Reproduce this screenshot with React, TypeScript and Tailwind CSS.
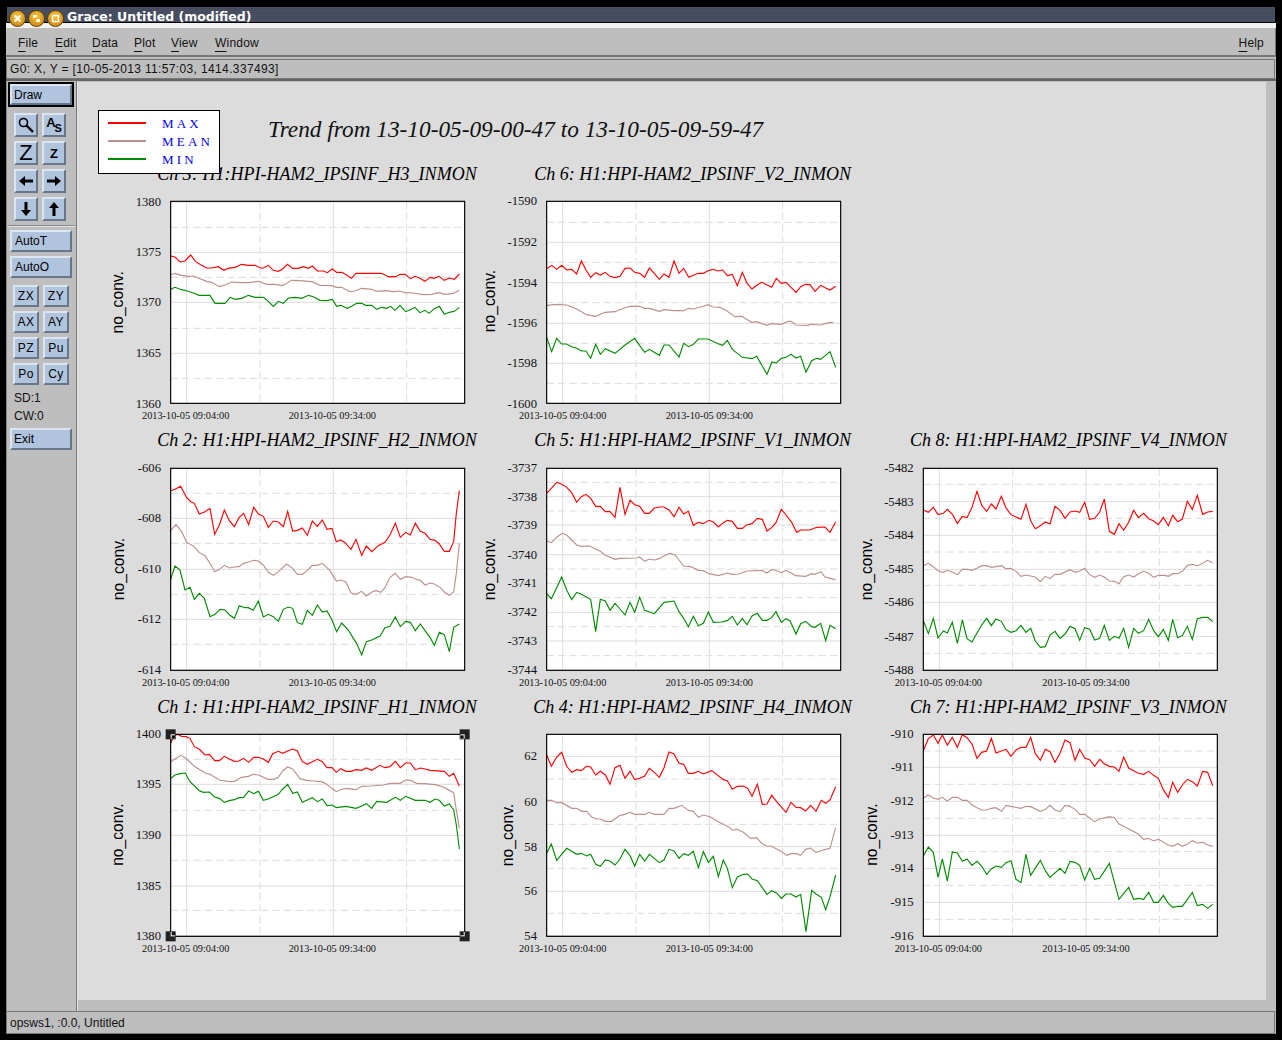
import type { ReactNode } from "react";

type Plot = {
  title: string;
  titleX: number;
  titleY: number;
  x0: number;
  top: number;
  h: number;
  yLabelX: number;
  yLabelY: number;
  ticks: [string, number][];
  minor: number[];
  red: string;
  mean: string;
  min: string;
  selected?: boolean;
};

const plotsRow1: Plot[] = [
  {
    title: "Ch 3: H1:HPI-HAM2_IPSINF_H3_INMON",
    titleX: 172,
    titleY: 58,
    x0: 212,
    top: 124,
    h: 270,
    yLabelX: 55,
    yLabelY: 424,
    ticks: [["1380", 126], ["1375", 277], ["1370", 427], ["1365", 580], ["1360", 733]],
    minor: [202, 352, 505, 655],
    red: "212,288 225,291 240,306 255,303 272,285 287,305 302,314 320,324 335,324 355,320 372,331 385,325 405,322 425,313 445,316 465,316 482,324 490,324 505,316 520,331 535,334 548,327 562,313 578,325 595,325 610,320 625,325 637,318 652,333 670,333 682,338 697,327 710,337 725,337 740,345 754,355 768,340 845,340 865,350 888,350 900,343 915,343 932,356 945,349 960,355 975,364 990,352 1003,355 1017,349 1033,361 1048,354 1063,358 1078,342",
    mean: "212,344 225,340 245,346 265,349 280,348 300,356 320,364 335,367 358,380 375,375 395,366 420,368 445,368 475,364 500,373 525,373 548,377 575,361 600,362 635,365 660,376 695,377 710,382 725,382 750,395 765,393 785,385 815,388 830,394 860,392 880,395 900,393 915,398 940,399 970,404 995,403 1015,398 1035,403 1060,400 1078,391",
    min: "212,388 225,382 245,389 262,393 280,399 297,406 330,406 345,430 375,430 390,412 405,418 425,415 445,406 465,412 490,412 505,424 520,439 535,424 550,430 565,414 585,412 605,415 625,406 640,410 660,421 680,422 697,418 710,439 722,436 742,445 755,439 770,430 785,430 797,436 815,436 830,448 845,442 860,445 872,439 885,451 900,436 917,455 930,449 945,442 960,458 975,451 987,460 1003,446 1018,439 1033,463 1048,457 1063,454 1078,442",
  },
  {
    title: "Ch 6: H1:HPI-HAM2_IPSINF_V2_INMON",
    titleX: 163,
    titleY: 58,
    x0: 200,
    top: 124,
    h: 270,
    yLabelX: 33,
    yLabelY: 420,
    ticks: [["-1590", 124], ["-1592", 247], ["-1594", 368], ["-1596", 490], ["-1598", 610], ["-1600", 732]],
    minor: [187, 307, 428, 550, 670],
    red: "200,326 215,316 230,328 245,316 260,330 275,328 290,342 304,303 318,330 332,352 347,338 361,345 376,337 390,349 405,353 420,349 435,325 450,324 464,337 479,340 494,352 508,324 523,340 538,358 552,342 567,352 582,303 597,340 611,325 626,352 640,346 655,340 670,340 684,332 699,328 713,333 728,330 742,347 757,343 772,377 787,337 801,370 816,387 830,376 845,367 860,374 875,382 889,355 904,370 918,367 933,382 948,397 962,380 977,373 990,374 1005,394 1022,376 1037,384 1050,390 1067,379",
    mean: "200,436 230,433 260,435 290,447 320,464 347,469 375,457 405,455 435,443 450,439 480,439 494,445 508,445 538,454 552,449 582,452 611,452 626,445 640,447 670,439 684,434 699,441 720,442 740,452 765,470 785,469 815,487 830,485 860,496 875,491 904,493 925,484 933,484 948,495 985,496 990,493 1020,495 1050,487 1060,488",
    min: "200,532 215,575 230,535 245,552 260,552 275,560 290,565 304,573 318,573 332,595 347,553 361,583 376,566 405,580 435,555 464,535 479,557 494,577 508,568 538,586 552,555 567,555 597,591 611,550 626,560 640,553 655,537 684,537 714,551 728,556 742,541 757,568 787,592 816,596 830,589 861,643 876,606 889,609 904,595 918,592 933,583 948,594 962,589 978,637 995,602 1010,595 1022,598 1050,575 1067,622",
  },
];

const plotsRow2: Plot[] = [
  {
    title: "Ch 2: H1:HPI-HAM2_IPSINF_H2_INMON",
    titleX: 172,
    titleY: 46,
    x0: 212,
    top: 115,
    h: 265,
    yLabelX: 60,
    yLabelY: 414,
    ticks: [["-606", 114], ["-608", 265], ["-610", 418], ["-612", 568], ["-614", 720]],
    minor: [190, 340, 493, 643],
    red: "212,182 225,178 242,169 260,203 272,215 283,220 298,252 315,245 330,235 344,313 358,285 373,240 388,272 403,290 417,263 431,250 446,284 461,232 475,252 490,259 505,292 520,273 535,276 550,290 563,244 578,303 592,301 607,294 622,316 637,273 652,289 667,270 681,298 696,295 709,335 722,330 735,338 753,358 768,328 785,376 799,348 815,365 835,347 855,337 870,315 886,280 901,322 917,307 931,315 946,280 961,304 975,310 990,328 1005,331 1018,342 1033,364 1048,364 1061,335 1069,250 1078,182",
    mean: "212,302 228,283 245,305 260,337 282,349 298,368 315,377 330,400 344,425 358,418 373,406 388,414 403,411 417,410 431,400 446,396 461,391 475,393 490,405 505,427 520,436 535,425 560,402 578,415 592,433 607,433 622,421 637,406 652,406 667,400 690,422 709,453 722,450 738,456 753,489 768,493 785,484 799,498 820,484 830,482 842,487 855,473 870,442 886,430 901,448 917,440 935,442 946,447 961,451 975,465 990,459 1003,462 1020,472 1033,486 1048,496 1061,486 1069,430 1078,340",
    min: "212,448 225,408 240,420 255,480 270,472 283,508 298,490 313,505 330,560 345,553 360,538 375,540 390,556 403,565 418,527 435,533 445,533 460,541 475,513 490,561 505,553 520,560 535,574 550,538 565,531 578,535 592,578 607,583 622,541 637,556 652,525 667,546 681,543 696,570 710,605 725,579 745,600 760,625 770,640 785,675 799,635 815,630 840,618 855,593 870,589 886,561 901,590 917,574 931,577 946,602 961,582 975,602 990,622 1003,646 1018,607 1033,614 1048,665 1061,592 1078,582",
  },
  {
    title: "Ch 5: H1:HPI-HAM2_IPSINF_V1_INMON",
    titleX: 163,
    titleY: 46,
    x0: 200,
    top: 115,
    h: 265,
    yLabelX: 33,
    yLabelY: 414,
    ticks: [["-3737", 114], ["-3738", 200], ["-3739", 285], ["-3740", 374], ["-3741", 460], ["-3742", 547], ["-3743", 633], ["-3744", 720]],
    minor: [157, 243, 330, 417, 503, 590, 677],
    red: "200,190 214,175 230,157 245,163 260,172 275,188 290,217 304,200 318,193 332,205 347,229 361,229 376,245 390,245 405,262 420,172 435,253 450,211 464,224 479,229 494,250 508,250 523,234 538,231 552,231 567,240 582,260 597,232 611,252 625,244 640,286 655,277 670,281 687,271 700,276 715,291 730,278 742,271 757,274 772,295 787,295 801,284 816,281 832,265 847,268 861,303 875,293 888,278 904,238 918,255 935,277 950,307 962,300 990,300 1010,292 1035,291 1050,307 1067,276",
    mean: "200,333 214,338 232,320 247,310 260,315 275,330 290,345 304,349 330,348 347,358 361,364 376,376 405,388 420,385 470,384 479,381 494,394 508,387 523,390 538,386 552,378 570,370 585,375 597,390 611,408 632,410 655,421 670,422 687,431 715,437 742,429 757,433 777,432 801,423 845,421 861,429 875,418 890,422 904,428 918,421 935,430 947,437 977,439 995,431 1005,433 1022,425 1035,441 1050,445 1067,449",
    min: "200,491 214,506 230,473 245,441 260,480 275,509 290,487 304,493 332,508 347,605 361,508 376,513 390,541 405,520 420,537 435,555 450,517 464,547 479,502 494,541 523,551 552,517 582,513 597,545 611,565 625,590 640,559 655,587 670,580 685,546 700,577 725,576 742,572 757,559 772,585 787,565 801,584 816,558 832,550 847,571 861,571 875,563 888,545 904,577 918,566 930,572 948,612 962,581 977,574 995,590 1005,592 1022,580 1037,632 1050,586 1067,596",
  },
  {
    title: "Ch 8: H1:HPI-HAM2_IPSINF_V4_INMON",
    titleX: 150,
    titleY: 46,
    x0: 190,
    top: 115,
    h: 265,
    yLabelX: 22,
    yLabelY: 414,
    ticks: [["-5482", 114], ["-5483", 215], ["-5484", 316], ["-5485", 418], ["-5486", 517], ["-5487", 620], ["-5488", 720]],
    minor: [163, 265, 366, 466, 570, 670],
    red: "190,240 205,247 220,232 234,254 250,250 262,238 277,253 292,280 307,259 321,263 336,232 351,184 365,226 380,244 394,222 408,237 424,199 438,234 453,254 468,261 483,268 498,223 512,272 526,296 541,287 556,276 570,282 585,229 600,241 615,265 630,246 645,243 659,247 674,217 689,268 704,265 719,246 733,207 748,304 763,313 777,281 791,301 806,277 821,241 835,263 851,250 866,266 881,273 895,284 910,262 925,287 938,256 953,275 967,267 982,214 997,238 1012,196 1028,253 1043,246 1058,244",
    mean: "190,407 205,400 220,410 234,422 250,427 262,421 277,427 292,434 307,418 321,418 336,421 351,415 365,407 380,407 394,412 408,410 424,407 438,416 453,415 468,424 483,439 498,435 526,441 541,455 556,439 570,446 585,433 600,433 630,419 645,427 659,423 674,415 689,434 704,442 719,435 733,441 748,453 763,454 777,461 791,440 806,435 821,441 835,431 851,424 866,430 881,442 895,436 915,436 925,439 938,431 953,431 967,424 982,406 997,403 1012,408 1028,400 1043,391 1058,398",
    min: "190,572 205,611 220,565 234,624 250,603 262,609 277,577 292,640 307,570 321,626 336,636 351,609 365,585 380,565 394,587 408,567 424,574 438,599 453,607 468,602 483,586 498,607 512,595 526,633 541,652 556,650 570,615 585,604 600,625 615,612 630,589 645,596 659,631 674,593 689,598 704,630 719,625 733,586 748,631 763,619 777,625 791,595 806,652 821,595 835,610 851,602 866,568 881,602 895,620 910,598 925,631 938,568 953,623 967,617 982,589 997,628 1012,566 1028,562 1043,562 1058,575",
  },
];

const plotsRow3: Plot[] = [
  {
    title: "Ch 1: H1:HPI-HAM2_IPSINF_H1_INMON",
    titleX: 172,
    titleY: 50,
    x0: 212,
    top: 118,
    h: 270,
    yLabelX: 55,
    yLabelY: 416,
    ticks: [["1400", 117], ["1395", 268], ["1390", 421], ["1385", 573], ["1380", 722]],
    minor: [193, 346, 496, 646],
    selected: true,
    red: "212,145 220,125 232,118 245,124 258,125 270,130 283,155 298,163 315,180 328,178 344,197 358,197 373,184 388,192 403,199 417,198 431,190 446,202 461,187 475,187 490,192 505,202 518,176 535,169 548,175 563,168 578,162 592,168 607,200 622,208 637,200 652,193 667,200 681,218 696,218 709,232 722,221 738,229 753,229 768,224 785,226 799,219 815,226 840,211 855,218 870,215 886,199 901,218 917,204 931,204 946,224 961,219 975,222 990,226 1033,229 1048,244 1061,235 1078,273",
    mean: "212,200 225,192 242,181 258,190 282,213 315,234 330,238 358,255 388,260 403,259 425,247 445,244 461,238 475,240 505,253 522,253 535,247 548,228 563,216 578,222 600,251 620,256 640,258 665,260 680,268 695,280 709,290 722,284 738,280 768,284 785,274 815,273 850,270 870,265 901,265 917,255 931,256 950,265 975,266 1005,269 1030,276 1061,293 1069,345 1078,400",
    min: "212,250 225,240 240,236 256,234 270,260 298,287 310,292 328,291 344,306 358,310 373,322 388,317 403,314 417,308 431,307 446,288 461,296 475,289 490,316 505,312 535,298 548,282 563,268 578,295 592,291 607,322 622,315 637,308 652,320 667,312 681,332 696,330 709,338 738,334 768,340 785,333 799,326 815,340 830,319 860,322 886,307 901,316 917,304 946,316 975,316 990,322 1005,312 1018,316 1033,333 1048,327 1061,345 1069,390 1078,462",
  },
  {
    title: "Ch 4: H1:HPI-HAM2_IPSINF_H4_INMON",
    titleX: 160,
    titleY: 50,
    x0: 200,
    top: 118,
    h: 270,
    yLabelX: 85,
    yLabelY: 417,
    ticks: [["62", 184], ["60", 320], ["58", 455], ["56", 589], ["54", 722]],
    minor: [252, 388, 520, 655],
    red: "200,180 214,214 230,186 245,172 260,214 275,232 290,224 304,227 320,213 332,216 347,240 361,229 376,240 390,268 405,218 420,211 435,250 450,229 464,254 479,250 494,243 508,220 523,232 538,247 552,218 567,171 582,177 597,205 611,208 625,235 640,235 655,229 670,237 695,227 710,238 730,254 742,257 757,283 772,274 790,273 803,280 816,304 832,268 847,328 861,327 875,301 890,320 918,352 933,322 948,337 962,338 977,348 992,331 1008,349 1024,316 1037,325 1050,315 1067,275",
    mean: "200,316 215,316 230,323 245,323 275,340 290,340 305,349 320,349 335,366 350,372 361,372 376,379 395,379 420,361 435,358 450,352 464,358 495,358 508,352 523,358 552,358 567,340 582,340 605,331 625,346 640,349 655,367 670,360 690,365 715,380 745,395 757,405 772,403 790,412 812,430 830,428 847,447 861,453 875,454 905,470 920,481 933,476 950,476 962,481 977,463 992,459 1008,472 1037,463 1050,460 1067,398",
    min: "200,475 214,447 230,496 260,460 290,478 304,475 320,483 332,478 347,508 361,514 376,495 390,498 405,510 420,492 435,463 450,482 464,513 479,478 494,498 508,478 538,503 552,495 567,463 582,468 597,490 611,476 625,481 640,469 655,518 670,470 685,502 700,484 715,545 730,495 742,520 757,578 772,546 790,538 803,537 816,552 832,557 861,598 875,587 890,594 904,610 918,597 933,597 948,606 962,598 978,710 995,586 1008,597 1024,607 1037,644 1050,605 1067,540",
  },
  {
    title: "Ch 7: H1:HPI-HAM2_IPSINF_V3_INMON",
    titleX: 150,
    titleY: 50,
    x0: 190,
    top: 118,
    h: 270,
    yLabelX: 38,
    yLabelY: 416,
    ticks: [["-910", 117], ["-911", 217], ["-912", 319], ["-913", 421], ["-914", 520], ["-915", 622], ["-916", 722]],
    minor: [168, 268, 370, 470, 571, 673],
    red: "190,167 205,131 220,120 234,145 247,120 262,150 277,127 292,157 307,119 321,128 336,147 351,190 365,172 380,168 394,130 408,174 424,168 438,163 453,184 468,165 483,157 498,157 512,127 526,176 541,196 556,163 570,170 585,202 600,175 615,135 630,143 645,196 659,163 674,189 689,194 704,214 719,193 733,206 748,214 763,216 777,229 791,186 806,219 821,227 835,235 851,238 866,229 881,241 895,250 910,284 925,307 938,262 953,292 967,270 982,253 997,260 1012,273 1028,229 1043,232 1058,272",
    mean: "190,310 205,300 220,309 234,313 247,307 262,318 277,307 292,307 307,316 321,316 336,330 351,338 365,345 380,345 394,340 408,338 424,349 438,331 453,334 483,340 498,334 512,335 541,349 556,343 570,331 585,345 600,350 615,331 630,334 645,343 659,358 674,358 704,380 719,372 748,365 763,368 777,387 791,394 806,402 835,417 851,433 866,430 881,438 895,433 925,450 938,454 953,446 967,454 982,448 997,437 1012,444 1028,442 1043,450 1058,454",
    min: "190,483 205,456 220,472 234,547 247,492 262,558 277,471 292,474 307,499 321,492 336,511 351,499 365,513 380,538 394,522 408,513 424,517 438,503 453,497 468,553 483,563 498,478 512,541 541,496 556,527 570,547 600,520 615,535 630,499 645,502 659,511 674,555 689,520 704,553 719,550 748,505 777,613 806,577 821,613 835,610 851,613 866,592 881,622 895,622 910,601 925,625 938,637 953,634 967,634 997,592 1012,632 1028,628 1043,640 1058,628",
  },
];

const GRID = "#dcdcdc";

const Handle = ({ x, y, dx, dy }: { x: number; y: number; dx: number; dy: number }) => (
  <g>
    <rect x={x - 15} y={y - 15} width={30} height={30} fill="#222" />
    <rect x={dx > 0 ? x : x - 13} y={dy > 0 ? y : y - 13} width={13} height={13} fill="#fff" />
    <rect x={dx > 0 ? x + 3 : x - 13} y={dy > 0 ? y + 3 : y - 13} width={10} height={10} fill="#111" />
  </g>
);

// coordinates are 3x screen pixels, so strokes are 3 units wide
const PlotView = ({ plot }: { plot: Plot }) => {
  const { x0, top, h } = plot;
  const w = 882;
  const bottom = top + 606;
  const right = x0 + w;
  const majorX = [x0 + 48, x0 + 488];
  const minorX = [x0 + 268, x0 + 708];
  const titleW = plot.titleX === 172 ? 958 : plot.titleX === 160 ? 955 : 950;

  return (
    <svg width={380} height={h} viewBox={`0 0 1140 ${h * 3}`} overflow="visible" className="block">
      <text
        x={plot.titleX}
        y={plot.titleY + 3}
        className="font-['Liberation_Serif',serif] italic text-[54px] fill-black"
        textLength={titleW}
      >
        {plot.title}
      </text>
      <rect x={x0} y={top} width={w} height={606} fill="#fff" />
      {plot.ticks.map(([, y], i) => (
        <line key={i} x1={x0} x2={right} y1={y} y2={y} stroke={GRID} strokeWidth={3} />
      ))}
      {plot.minor.map((y) => (
        <line key={y} x1={x0} x2={right} y1={y} y2={y} stroke={GRID} strokeWidth={3} strokeDasharray="22 12" />
      ))}
      {majorX.map((x) => (
        <line key={x} x1={x} x2={x} y1={top} y2={bottom} stroke={GRID} strokeWidth={3} />
      ))}
      {minorX.map((x) => (
        <line key={x} x1={x} x2={x} y1={top} y2={bottom} stroke={GRID} strokeWidth={3} strokeDasharray="22 12" />
      ))}
      <polyline points={plot.mean} fill="none" stroke="#bc8f8f" strokeWidth={3.4} />
      <polyline points={plot.red} fill="none" stroke="#ff0000" strokeWidth={3.4} />
      <polyline points={plot.min} fill="none" stroke="#008b00" strokeWidth={3.4} />
      <rect x={x0} y={top} width={w} height={606} fill="none" stroke="#000" strokeWidth={3.5} />
      {plot.ticks.map(([label, y]) => (
        <text
          key={label}
          x={x0 - 29}
          y={y + 12}
          textAnchor="end"
          className="font-['Liberation_Serif',serif] text-[38px] fill-[#111]"
        >
          {label}
        </text>
      ))}
      {majorX.map((x, i) => (
        <text
          key={x}
          x={x - 3 + (x0 === 200 ? 3 : 0) + (x0 === 190 && i === 1 ? 3 : 0)}
          y={bottom + 46}
          textAnchor="middle"
          className="font-['Liberation_Serif',serif] text-[31px] fill-[#111]"
          textLength={262}
        >
          {i === 0 ? "2013-10-05 09:04:00" : "2013-10-05 09:34:00"}
        </text>
      ))}
      <text
        x={plot.yLabelX + 13}
        y={plot.yLabelY + 3}
        textAnchor="middle"
        transform={`rotate(-90 ${plot.yLabelX + 13} ${plot.yLabelY + 3})`}
        className="font-['Liberation_Sans',sans-serif] text-[47px] fill-black"
      >
        no_conv.
      </text>
      {plot.selected && (
        <>
          <Handle x={x0} y={top} dx={1} dy={1} />
          <Handle x={right} y={top} dx={-1} dy={1} />
          <Handle x={x0} y={bottom} dx={1} dy={-1} />
          <Handle x={right} y={bottom} dx={-1} dy={-1} />
        </>
      )}
    </svg>
  );
};

const bevel = "border-2 border-t-[#dbe5f1] border-l-[#dbe5f1] border-b-[#68768a] border-r-[#68768a] bg-[#b0c4de]";

const TextBtn = ({ label, className }: { label: string; className?: string }) => (
  <div className={`${bevel} h-[22px] flex items-center pl-[3px] text-[12px] text-black ${className ?? "w-[62px] ml-[4px]"}`}>
    {label}
  </div>
);

const SmallBtn = ({ label }: { label: string }) => (
  <div className={`${bevel} w-[26px] h-[22px] flex items-center justify-center text-[12px] tracking-[0.5px] text-black`}>
    {label}
  </div>
);

const IconBtn = ({ children }: { children: ReactNode }) => (
  <div className={`${bevel} w-[24px] h-[24px] flex items-center justify-center text-black overflow-hidden`}>
    {children}
  </div>
);

const Arrow = ({ dir }: { dir: "left" | "right" | "up" | "down" }) => {
  const rotate = { right: 0, down: 90, left: 180, up: 270 }[dir];
  return (
    <svg width={16} height={16} viewBox="0 0 16 16" className="block">
      <g transform={`rotate(${rotate} 8 8)`}>
        <path d="M1 6.5h8V3l6 5-6 5V9.5H1z" fill="#000" />
      </g>
    </svg>
  );
};

const TitleButton = ({ children }: { children: ReactNode }) => (
  <div className="w-[17px] h-[17px] mt-[3px] rounded-full border border-[#5a3c08] bg-[radial-gradient(circle_at_50%_35%,#f7c23c,#c97f0c)] flex items-center justify-center shrink-0">
    {children}
  </div>
);

const MenuItem = ({ first, rest, className }: { first: string; rest: string; className: string }) => (
  <span className={className}>
    <span className="underline underline-offset-[4px]">{first}</span>
    {rest}
  </span>
);

const App = () => {
  return (
    <div className="w-[1282px] h-[1040px] bg-black pt-[6px] px-[6px] font-['Liberation_Sans',sans-serif] text-[#111] overflow-hidden">
      <div className="h-[1028px] flex flex-col bg-[#bebebe]">
        <div className="h-[17px] shrink-0 border border-black bg-[repeating-linear-gradient(180deg,#4a5163_0px,#4a5163_1px,#434a5b_1px,#434a5b_2px)] flex items-start gap-[2px] pl-[2px] relative">
          <TitleButton>
            <svg width={9} height={9} viewBox="0 0 9 9">
              <path d="M1.5 1.5l6 6M7.5 1.5l-6 6" stroke="#fff" strokeWidth={2} />
            </svg>
          </TitleButton>
          <TitleButton>
            <svg width={9} height={9} viewBox="0 0 9 9">
              <path d="M1 1h4v2H3v1H1zM5 5h3v3H4V6h1z" fill="#fff" />
            </svg>
          </TitleButton>
          <TitleButton>
            <svg width={9} height={9} viewBox="0 0 9 9">
              <rect x={1.5} y={1.5} width={6} height={6} fill="none" stroke="#fff" strokeWidth={1.5} />
            </svg>
          </TitleButton>
          <span className="ml-[1px] font-['DejaVu_Sans',sans-serif] font-bold text-[12.5px] leading-[19px] text-white whitespace-nowrap">
            Grace: Untitled (modified)
          </span>
        </div>
        <div className="h-[5px] shrink-0 bg-[#f2f2f0]" />
        <div className="h-[29px] shrink-0 flex items-center pt-[2px] pl-[12px] pr-[11px] text-[12px] tracking-[0.2px] border-b-2 border-[#777] border-r border-r-[#777]">
          <MenuItem first="F" rest="ile" className="w-[37px]" />
          <MenuItem first="E" rest="dit" className="w-[37px]" />
          <MenuItem first="D" rest="ata" className="w-[42px]" />
          <MenuItem first="P" rest="lot" className="w-[37px]" />
          <MenuItem first="V" rest="iew" className="w-[44px]" />
          <MenuItem first="W" rest="indow" className="w-[48px]" />
          <MenuItem first="H" rest="elp" className="ml-auto" />
        </div>
        <div className="h-[20px] mt-[2px] shrink-0 flex items-center pb-[1px] pl-[3px] border border-[#777] text-[12px] tracking-[0.36px] mr-[1px]">
          G0: X, Y = [10-05-2013 11:57:03, 1414.337493]
        </div>
        <div className="h-[2px] shrink-0 bg-[#666]" />
        <div className="flex-1 flex min-h-0">
          <div className="w-[70px] shrink-0 border-l border-[#888] flex flex-col text-[12px]">
            <div className="mt-[1px] ml-[1px] w-[66px] h-[25px] border-2 border-black">
              <TextBtn label="Draw" className="w-full h-full !pl-[2px]" />
            </div>
            <div className="mt-[6px] ml-[7px] grid grid-cols-[24px_24px] gap-x-[4px] gap-y-[4px]">
              <IconBtn>
                <svg width={18} height={18} viewBox="0 0 18 18">
                  <circle cx={6.5} cy={6.5} r={4} fill="none" stroke="#000" strokeWidth={1.6} />
                  <path d="M9.5 9.5l6.5 6.5" stroke="#000" strokeWidth={2.4} />
                </svg>
              </IconBtn>
              <IconBtn>
                <span className="font-bold text-[13px] leading-none -mt-[5px] -mr-[1px]">A</span>
                <span className="font-bold text-[11px] leading-none mt-[6px]">S</span>
              </IconBtn>
              <IconBtn>
                <span className="text-[22px] leading-none">Z</span>
              </IconBtn>
              <IconBtn>
                <span className="text-[13px] leading-none font-bold">Z</span>
              </IconBtn>
              <IconBtn><Arrow dir="left" /></IconBtn>
              <IconBtn><Arrow dir="right" /></IconBtn>
              <IconBtn><Arrow dir="down" /></IconBtn>
              <IconBtn><Arrow dir="up" /></IconBtn>
            </div>
            <div className="mt-[4px] h-[2px] bg-[#e4e4e4] border-t border-[#888] ml-[1px] mr-[1px]" />
            <TextBtn label="AutoT" className="w-[62px] ml-[3px] mt-[3px]" />
            <TextBtn label="AutoO" className="w-[62px] ml-[3px] mt-[4px]" />
            <div className="mt-[7px] ml-[6px] grid grid-cols-[26px_26px] gap-x-[4px] gap-y-[4px]">
              {["ZX", "ZY", "AX", "AY", "PZ", "Pu", "Po", "Cy"].map((l) => (
                <SmallBtn key={l} label={l} />
              ))}
            </div>
            <div className="mt-[4px] ml-[7px] h-[18px] leading-[18px]">SD:1</div>
            <div className="ml-[7px] h-[18px] leading-[18px]">CW:0</div>
            <TextBtn label="Exit" className="w-[62px] ml-[3px] mt-[3px] !pl-[2px]" />
          </div>
          <div className="w-[2px] shrink-0 bg-[#777] border-r border-[#e4e4e4]" />
          <div className="flex-1 min-w-0 flex flex-col pr-[2px]">
            <div className="flex-1 flex min-h-0 pt-[1px]">
              <div className="relative w-[1188px] h-[918px] bg-[#dcdcdc] pl-[22px] overflow-hidden">
                <div className="h-[78px] pt-[29px] pl-[168px] leading-[36px] text-[23.3px] italic font-['Liberation_Serif',serif] text-[#111] whitespace-nowrap">
                  Trend from 13-10-05-09-00-47 to 13-10-05-09-59-47
                </div>
                <div className="absolute left-[20px] top-[28px] w-[122px] h-[64px] bg-white border border-black flex flex-col justify-center pb-[2px] pl-[9px] z-10">
                  {[
                    { l: "MAX", c: "bg-[#ff0000]" },
                    { l: "MEAN", c: "bg-[#bc8f8f]" },
                    { l: "MIN", c: "bg-[#008b00]" },
                  ].map((row) => (
                    <div key={row.l} className="h-[18px] flex items-start">
                      <div className={`w-[38px] h-[2px] mt-[8px] ${row.c}`} />
                      <span className="ml-[16px] mt-[3px] text-[13px] tracking-[3.2px] text-[#0000ff] font-['Liberation_Serif',serif] leading-none">
                        {row.l}
                      </span>
                    </div>
                  ))}
                </div>
                <div className="grid grid-cols-[repeat(3,380px)]">
                  {plotsRow1.map((p) => (
                    <PlotView key={p.title} plot={p} />
                  ))}
                  <div />
                  {plotsRow2.map((p) => (
                    <PlotView key={p.title} plot={p} />
                  ))}
                  {plotsRow3.map((p) => (
                    <PlotView key={p.title} plot={p} />
                  ))}
                </div>
              </div>
              <div className="flex-1 bg-[#bebebe]" />
            </div>
            <div className="h-[11px] shrink-0 bg-[#bebebe]" />
          </div>
        </div>
        <div className="h-[23px] shrink-0 border border-[#777] flex items-center pl-[3px] text-[12px] mr-[1px]">
          opsws1, :0.0, Untitled
        </div>
      </div>
    </div>
  );
};

export default App;
